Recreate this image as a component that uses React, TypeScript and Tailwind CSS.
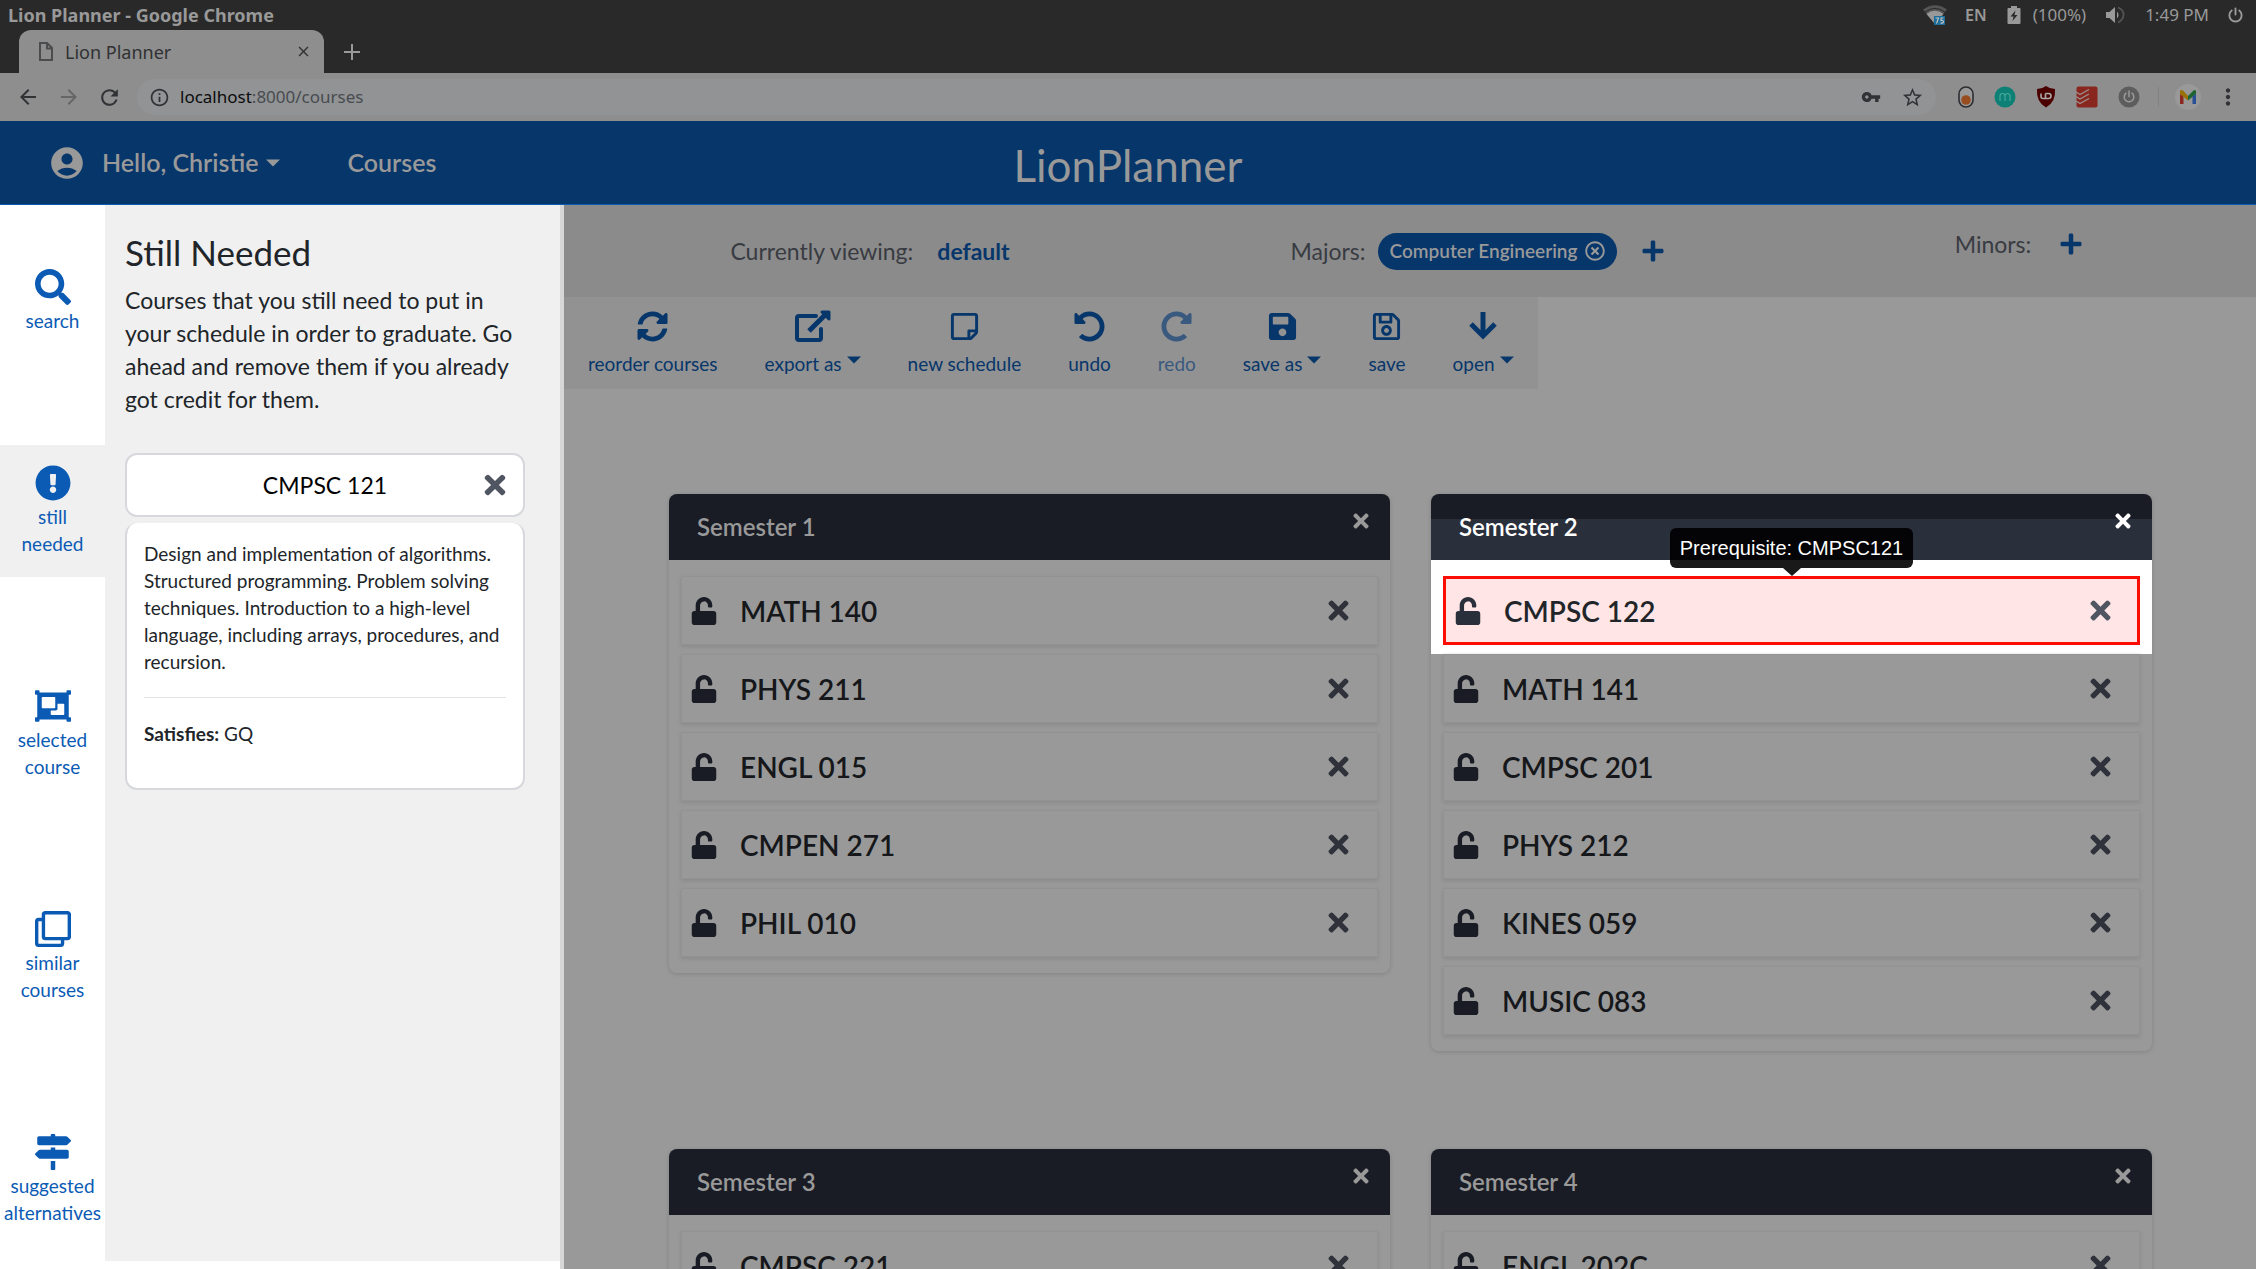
import type { ReactNode } from 'react';
import {
  FaExclamationCircle,
  FaMapSigns,
  FaObjectGroup,
  FaPlus,
  FaRegClone,
  FaRegSave,
  FaRegStickyNote,
  FaRegTimesCircle,
  FaRedoAlt,
  FaSave,
  FaSearch,
  FaSyncAlt,
  FaTimes,
  FaUndoAlt,
  FaUnlock,
} from 'react-icons/fa';
import {
  MdAccountCircle,
  MdArrowBack,
  MdArrowForward,
  MdClose,
  MdInfoOutline,
  MdMoreVert,
  MdRefresh,
  MdStarBorder,
  MdVpnKey,
} from 'react-icons/md';

/* ---------- Desktop and browser chrome ---------- */

function WifiIcon() {
  return (
    <svg width="24" height="20" viewBox="0 0 24 20" aria-hidden="true">
      <path d="M0 4.500Q12-4 24 4.500L12 19Z" fill="#555" />
      <path d="M3.500 9Q12 2.500 20.500 9L12 19Z" fill="#999" />
      <path d="M2 7.200Q12-.500 22 7.200" fill="none" stroke="#2a2a2a" strokeWidth="1" />
      <rect x="11" y="11" width="11" height="9" fill="#1d6d9b" />
      <path d="M12.500 13H15.500L13.500 18.500M20.500 13H18V15.500Q20.800 15 20.500 17Q20 18.600 17.500 18" fill="none" stroke="#c4c4c4" strokeWidth="1.100" />
    </svg>
  );
}

function BatteryIcon() {
  return (
    <svg width="14" height="18" viewBox="0 0 14 18" aria-hidden="true">
      <path d="M4 0h6v2h2.500q1 0 1 1v14q0 1-1 1h-11q-1 0-1-1V3q0-1 1-1H4Z" fill="#999" />
      <path d="M8.500 4.500 3.500 10.500H6.500L5.500 15 10.500 9H7.500Z" fill="#2a2a2a" />
    </svg>
  );
}

function SpeakerIcon() {
  return (
    <svg width="19" height="18" viewBox="0 0 19 18" aria-hidden="true">
      <path d="M0 6h3.500L9 1v16L3.500 12H0Z" fill="#999" />
      <path d="M11 5.500Q14 9 11 12.500Z" fill="#999" />
      <path d="M12 1.500Q18 4 17.500 9T12 16.500" fill="none" stroke="#555" strokeWidth="1.800" />
    </svg>
  );
}

function PowerIcon({ size, color }: { size: number; color: string }) {
  return (
    <svg width={size} height={size} viewBox="0 0 18 18" fill="none" stroke={color} strokeWidth="2" strokeLinecap="round" aria-hidden="true">
      <path d="M9 1.500V8M5 3.800A6.500 6.500 0 1 0 13 3.800" />
    </svg>
  );
}

function SystemBar() {
  return (
    <div className="flex h-[30px] shrink-0 items-center justify-between bg-[#292929] pl-2 pr-3 text-[17px] text-[#999]">
      <span className="text-lg leading-6 font-bold">Lion Planner - Google Chrome</span>
      <div className="flex items-center">
        <WifiIcon />
        <span className="ml-[18px] text-base font-semibold">EN</span>
        <span className="ml-5 flex items-center gap-3">
          <BatteryIcon />
          (100%)
        </span>
        <span className="ml-5">
          <SpeakerIcon />
        </span>
        <time className="ml-5">1:49 PM</time>
        <span className="ml-[18px]">
          <PowerIcon size={17} color="#999" />
        </span>
      </div>
    </div>
  );
}

function TabStrip() {
  return (
    <div className="flex h-[43px] shrink-0 items-stretch bg-[#292929] pl-[19px]">
      <div className="flex w-[305px] items-center rounded-t-xl bg-[#8e8e8e] pl-5 pr-3 text-lg text-[#313233]">
        <svg width="14" height="19" viewBox="0 0 14 19" fill="none" stroke="#4a4c4e" strokeWidth="2" aria-hidden="true">
          <path d="M1 1H8L13 6V18H1ZM8 1V6.500H13" />
        </svg>
        <span className="ml-3 flex-1">Lion Planner</span>
        <button type="button" aria-label="Close tab" className="text-[#313233]">
          <MdClose size={17} />
        </button>
      </div>
      <button type="button" aria-label="New tab" className="ml-5 text-[#999]">
        <svg width="16" height="16" viewBox="0 0 16 16" stroke="currentColor" strokeWidth="2" aria-hidden="true">
          <path d="M8 0V16M0 8H16" />
        </svg>
      </button>
    </div>
  );
}

function ToggleExtension() {
  return (
    <svg width="16" height="22" viewBox="0 0 16 22" aria-hidden="true">
      <rect x="1" y="1" width="14" height="20" rx="7" fill="#999" stroke="#2b2d31" strokeWidth="1.600" />
      <circle cx="8" cy="14" r="4.800" fill="#974d20" />
    </svg>
  );
}

function MentionExtension() {
  return (
    <svg width="22" height="22" viewBox="0 0 22 22" aria-hidden="true">
      <circle cx="11" cy="11" r="10.500" fill="#0d8075" />
      <path d="M6 15V10Q6 7.500 8.500 7.500T11 10V15M11 10Q11 7.500 13.500 7.500T16 10V15" fill="none" stroke="#46a79b" strokeWidth="1.200" />
    </svg>
  );
}

function ShieldExtension() {
  return (
    <svg width="20" height="22" viewBox="0 0 20 22" aria-hidden="true">
      <path d="M10 0Q14 3 19 3Q20 16 10 21.500Q0 16 1 3Q6 3 10 0Z" fill="#4b0000" />
      <path d="M5 7.500V10.500Q5 12.500 7 12.500H9.500V7.500M9.500 7.500H12.500Q15 7.500 15 10T12.500 12.500H9.500" fill="none" stroke="#a8a8a8" strokeWidth="1.600" />
    </svg>
  );
}

function TasksExtension() {
  return (
    <svg width="22" height="22" viewBox="0 0 22 22" aria-hidden="true">
      <rect x=".500" y=".500" width="21" height="21" rx="2" fill="#89271e" />
      <path d="M0 6 4 8.500 13 3.500M0 10.500 4 13 13 8M0 15 4 17.500 13 12.500" fill="none" stroke="#9b8f8e" strokeWidth="1.400" />
    </svg>
  );
}

function PowerExtension() {
  return (
    <svg width="22" height="22" viewBox="0 0 22 22" aria-hidden="true">
      <circle cx="11" cy="11" r="10.500" fill="#5d5d5d" />
      <path d="M11 5V10.500M8 7.200A4.800 4.800 0 1 0 14 7.200" fill="none" stroke="#999" strokeWidth="1.500" strokeLinecap="round" />
    </svg>
  );
}

function MailIcon() {
  return (
    <svg width="26" height="26" viewBox="0 0 26 26" aria-hidden="true">
      <circle cx="13" cy="13" r="13" fill="#999" />
      <path d="M5 10 8.500 12.500V20H5Z" fill="#8d2820" />
      <path d="M5 6.500Q6.500 5.500 8 6.500L13 12 13 16.500 5 10Z" fill="#977105" />
      <path d="M13 12 18.500 6.500Q20 5.500 21 7V10L13 16.500Z" fill="#1f6532" />
      <path d="M17.500 12.500 21 10V20H17.500Z" fill="#284f96" />
    </svg>
  );
}

function AddressBar() {
  return (
    <div className="flex h-12 shrink-0 items-center bg-[#8e8e8e] pl-4 pr-[15px] text-[#303235]">
      <button type="button" aria-label="Back">
        <MdArrowBack size={24} />
      </button>
      <button type="button" aria-label="Forward" className="ml-[17px] text-[#666]">
        <MdArrowForward size={24} />
      </button>
      <button type="button" aria-label="Reload" className="ml-4">
        <MdRefresh size={25} />
      </button>
      <div className="ml-[15px] flex h-9 flex-1 items-center rounded-full bg-[#919395] pl-3 pr-3">
        <MdInfoOutline size={21} />
        <div role="textbox" aria-label="Address" className="ml-[10px] flex-1 text-[17px] text-[#484b4f]">
          <span className="text-[#0c0c0c]">localhost</span>:8000/courses
        </div>
        <button type="button" aria-label="Saved passwords">
          <MdVpnKey size={20} />
        </button>
        <button type="button" aria-label="Bookmark this page" className="ml-5">
          <MdStarBorder size={23} />
        </button>
      </div>
      <div className="ml-[22px] flex items-center gap-5">
        <ToggleExtension />
        <MentionExtension />
        <ShieldExtension />
        <TasksExtension />
        <PowerExtension />
      </div>
      <span className="ml-[18px] h-5 w-px bg-[#808284]" />
      <button type="button" aria-label="Profile" className="ml-4">
        <MailIcon />
      </button>
      <button type="button" aria-label="Browser menu" className="ml-[14px]">
        <MdMoreVert size={26} />
      </button>
    </div>
  );
}

/* ---------- Application ---------- */

function Caret() {
  return (
    <svg width="14" height="8" viewBox="0 0 14 8" fill="currentColor" aria-hidden="true">
      <path d="M0 .500H14L7 7.500Z" />
    </svg>
  );
}

function AppHeader() {
  return (
    <header className="grid h-[84px] shrink-0 grid-cols-3 items-center border-b border-[#0b5bb5] bg-[#07366b] text-[#999]">
      <nav className="flex items-center pl-12 text-[25px] font-semibold">
        <MdAccountCircle size={38} />
        <button type="button" className="ml-4 flex items-center gap-2">
          Hello, Christie
          <Caret />
        </button>
        <a href="#courses" className="ml-[67px]">
          Courses
        </a>
      </nav>
      <h1 className="pt-1 text-center text-[44px] leading-[52px] font-normal">LionPlanner</h1>
    </header>
  );
}

const sideItems = [
  { label: 'search', icon: <FaSearch size={36} /> },
  { label: 'still needed', icon: <FaExclamationCircle size={36} />, active: true },
  { label: 'selected course', icon: <FaObjectGroup size={36} /> },
  { label: 'similar courses', icon: <FaRegClone size={36} /> },
  { label: 'suggested alternatives', icon: <FaMapSigns size={36} /> },
];

function SideNav() {
  return (
    <nav className="flex w-[105px] shrink-0 flex-col gap-[91px] bg-white pt-11 text-[#0b5bb5]">
      {sideItems.map((item) => (
        <button
          key={item.label}
          type="button"
          className={
            item.active
              ? 'flex flex-col items-center gap-[2px] bg-[#f0f0f0] py-5 text-[19px] leading-[27px]'
              : 'flex flex-col items-center gap-[2px] py-5 text-[19px] leading-[27px]'
          }
        >
          {item.icon}
          <span className="w-min text-center">{item.label}</span>
        </button>
      ))}
    </nav>
  );
}

function NeededPanel() {
  return (
    <aside className="flex w-[459px] shrink-0 border-r-4 border-[#d7d7d7] bg-white pb-2">
      <div className="flex-1 bg-[#f0f0f0] pl-5 pt-6">
        <h2 className="text-[35px] leading-[46px] text-[#212529]">Still Needed</h2>
        <p className="mt-[9px] pr-9 text-[23px] leading-[33px] text-[#212529]">
          Courses that you still need to put in your schedule in order to graduate. Go ahead and remove them if you already got credit for them.
        </p>
        <div className="mr-[35px]">
          <div className="mt-[37px] grid h-16 grid-cols-[56px_1fr_56px] items-center rounded-xl border-2 border-[#d6d8dc] bg-white text-center text-[23px] text-black">
            <span className="col-start-2">CMPSC 121</span>
            <button type="button" aria-label="Remove CMPSC 121" className="justify-self-center text-[#4f5561]">
              <FaTimes size={30} />
            </button>
          </div>
          <div className="mt-[6px] rounded-xl border-2 border-t-0 border-[#d6d8dc] bg-white px-[17px] pb-[41px] pt-[17px] text-[19px] leading-[27px] text-[#212529]">
            <p>
              Design and implementation of algorithms. Structured programming. Problem solving techniques. Introduction to a high-level language, including
              arrays, procedures, and recursion.
            </p>
            <hr className="my-[22px] border-[#e1e3e5]" />
            <p>
              <strong className="font-bold">Satisfies:</strong> GQ
            </p>
          </div>
        </div>
      </div>
    </aside>
  );
}

function PlanBar() {
  return (
    <section className="grid h-[92px] shrink-0 grid-cols-3 bg-[#8b8b8b] text-[23px] text-[#393b42]">
      <div className="flex items-center justify-center gap-6 pl-12">
        Currently viewing:
        <a href="#default" className="font-bold text-[#07366b]">
          default
        </a>
      </div>
      <div className="flex items-center justify-center pl-[136px]">
        Majors:
        <span className="ml-3 flex h-[37px] items-center gap-2 rounded-full bg-[#07366b] px-3 text-[19px] font-semibold whitespace-nowrap text-[#999]">
          Computer Engineering
          <button type="button" aria-label="Remove Computer Engineering">
            <FaRegTimesCircle size={20} />
          </button>
        </span>
        <button type="button" aria-label="Add major" className="ml-6 text-[#07366b]">
          <FaPlus size={24} />
        </button>
      </div>
      <div className="flex items-center justify-center gap-7 pb-[14px] pl-[90px]">
        Minors:
        <button type="button" aria-label="Add minor" className="text-[#07366b]">
          <FaPlus size={24} />
        </button>
      </div>
    </section>
  );
}

function ExportIcon() {
  return (
    <svg width="36" height="32" viewBox="0 0 36 32" fill="none" stroke="currentColor" strokeWidth="4" strokeLinejoin="round" strokeLinecap="round" aria-hidden="true">
      <path d="M21 6H4Q2 6 2 8V28Q2 30 4 30H24Q26 30 26 28V19" />
      <path d="M14 21 30 5" strokeWidth="5" strokeLinecap="butt" />
      <path d="M27 2H34V9Z" fill="currentColor" strokeWidth="3" />
    </svg>
  );
}

function ArrowDownIcon() {
  return (
    <svg width="28" height="28" viewBox="0 0 28 28" fill="none" stroke="currentColor" strokeWidth="5" aria-hidden="true">
      <path d="M14 0V24" />
      <path d="M2 12 14 24 26 12" />
    </svg>
  );
}

const tools: { label: string; icon: ReactNode; menu?: boolean; disabled?: boolean }[] = [
  { label: 'reorder courses', icon: <FaSyncAlt size={31} /> },
  { label: 'export as', icon: <ExportIcon />, menu: true },
  { label: 'new schedule', icon: <FaRegStickyNote size={31} /> },
  { label: 'undo', icon: <FaUndoAlt size={31} /> },
  { label: 'redo', icon: <FaRedoAlt size={31} />, disabled: true },
  { label: 'save as', icon: <FaSave size={31} />, menu: true },
  { label: 'save', icon: <FaRegSave size={31} /> },
  { label: 'open', icon: <ArrowDownIcon />, menu: true },
];

function Toolbar() {
  return (
    <div role="toolbar" className="flex h-[92px] shrink-0 gap-[47px] self-start bg-[#929292] px-6 text-[19px] leading-[27px] text-[#07366b]">
      {tools.map((tool) => (
        <button
          key={tool.label}
          type="button"
          disabled={tool.disabled}
          className={tool.disabled ? 'flex flex-col items-center pt-[11px] text-[#39597f]' : 'flex flex-col items-center pt-[11px]'}
        >
          <span className="flex h-9 items-center">{tool.icon}</span>
          <span className="mt-[6px] flex gap-[5px]">
            {tool.label}
            {tool.menu && (
              <span className="pt-[6px]">
                <Caret />
              </span>
            )}
          </span>
        </button>
      ))}
    </div>
  );
}

type Semester = { name: string; courses: string[]; blocked?: string; note?: string };

const semesters: Semester[] = [
  { name: 'Semester 1', courses: ['MATH 140', 'PHYS 211', 'ENGL 015', 'CMPEN 271', 'PHIL 010'] },
  {
    name: 'Semester 2',
    courses: ['CMPSC 122', 'MATH 141', 'CMPSC 201', 'PHYS 212', 'KINES 059', 'MUSIC 083'],
    blocked: 'CMPSC 122',
    note: 'Prerequisite: CMPSC121',
  },
  { name: 'Semester 3', courses: ['CMPSC 221'] },
  { name: 'Semester 4', courses: ['ENGL 202C'] },
];

function CourseRow({ name, note }: { name: string; note?: string }) {
  return (
    <li className={note ? 'bg-white px-3 pb-[9px] first:pt-4' : 'px-3 pb-[9px] first:pt-4'}>
      <div
        className={
          note
            ? 'relative flex h-[69px] items-center border-3 border-[#fb0d04] bg-[#ffe5e5] pl-2 pr-[22px] text-[#2a303b]'
            : 'flex h-[69px] items-center border border-[#929292] pl-2 pr-6 text-[#1a1c25] shadow-[0_2px_4px_#8a8a8a]'
        }
      >
        <button type="button" aria-label={`Lock ${name}`}>
          <FaUnlock size={28} />
        </button>
        <span className={note ? 'ml-[22px] flex-1 text-[28px] font-semibold text-[#212529]' : 'ml-[22px] flex-1 text-[28px] font-semibold text-[#15171a]'}>
          {name}
        </span>
        <button type="button" aria-label={`Remove ${name}`} className={note ? 'text-[#4f5561]' : 'text-[#2f323a]'}>
          <FaTimes size={29} />
        </button>
        {note && (
          <div className="absolute inset-x-0 bottom-full flex flex-col items-center pb-[3px]">
            <div role="tooltip" className="rounded-md bg-black/90 px-[10px] font-['Liberation_Sans',sans-serif] text-[20px] leading-10 text-white">
              {note}
            </div>
            <svg width="18" height="8" viewBox="0 0 18 8" className="fill-black/90" aria-hidden="true">
              <path d="M0 0H18L9 8Z" />
            </svg>
          </div>
        )}
      </div>
    </li>
  );
}

function SemesterCard({ semester }: { semester: Semester }) {
  const lit = Boolean(semester.blocked);
  return (
    <section className="self-start rounded-lg shadow-[0_1px_4px_#838383]">
      <header
        className={
          lit
            ? 'flex h-[66px] justify-between rounded-t-lg bg-linear-to-b from-[#1a1c25] from-[25px] to-[#2a2f3c] to-[25px] pl-7 pr-[18px] text-white'
            : 'flex h-[66px] justify-between rounded-t-lg bg-[#1a1c25] pl-7 pr-[18px] text-[#999]'
        }
      >
        <h3 className="self-center text-[24px] font-semibold">{semester.name}</h3>
        <button type="button" aria-label={`Remove ${semester.name}`} className="mb-3">
          <FaTimes size={22} />
        </button>
      </header>
      <ul className="pb-[7px]">
        {semester.courses.map((course) => (
          <CourseRow key={course} name={course} note={course === semester.blocked ? semester.note : undefined} />
        ))}
      </ul>
    </section>
  );
}

export default function App() {
  return (
    <div className="flex h-screen flex-col overflow-hidden bg-[#999] font-['Lato','Open_Sans',sans-serif]">
      <div className="shrink-0 font-['Noto_Sans','Open_Sans',sans-serif]">
        <SystemBar />
        <TabStrip />
        <AddressBar />
      </div>
      <AppHeader />
      <div className="flex min-h-0 flex-1">
        <SideNav />
        <NeededPanel />
        <main className="flex min-w-0 flex-1 flex-col overflow-hidden">
          <PlanBar />
          <Toolbar />
          <div className="grid grid-cols-2 gap-x-[41px] gap-y-[98px] pl-[105px] pr-[104px] pt-[105px]">
            {semesters.map((semester) => (
              <SemesterCard key={semester.name} semester={semester} />
            ))}
          </div>
        </main>
      </div>
    </div>
  );
}
